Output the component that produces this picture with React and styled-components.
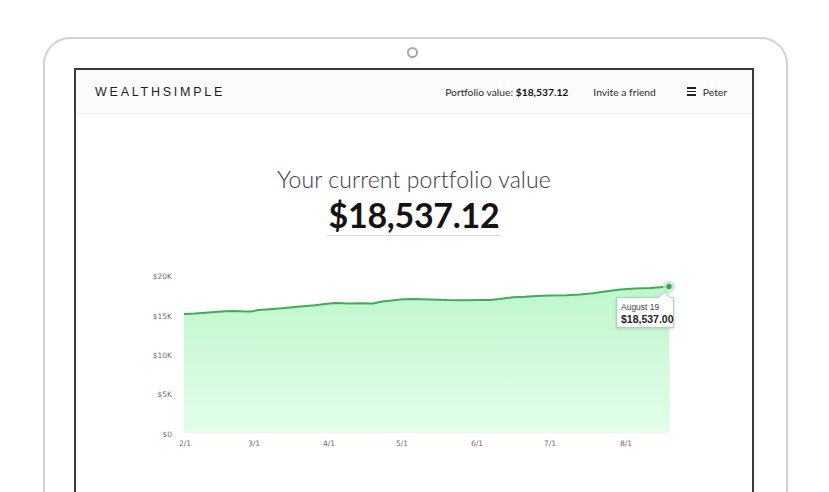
import React from 'react';
import styled, { createGlobalStyle } from 'styled-components';

const GlobalStyle = createGlobalStyle`
  html, body {
    margin: 0;
    padding: 0;
    background: #ffffff;
    overflow: hidden;
  }
  body {
    font-family: "Lato", "Liberation Sans", sans-serif;
    color: #222;
  }
`;

const Stage = styled.div`
  width: 829px;
  height: 492px;
  overflow: hidden;
  padding-top: 37px;
  box-sizing: border-box;
`;

const Laptop = styled.div`
  margin-left: 43px;
  width: 745px;
  height: 520px;
  box-sizing: border-box;
  border: 2px solid #d2d2d2;
  border-bottom: none;
  border-radius: 27px 27px 0 0;
  padding: 8px 32px 0 29px;
  display: flex;
  flex-direction: column;
  align-items: center;
`;

const Camera = styled.div`
  width: 7px;
  height: 7px;
  border: 2px solid #a9a9a9;
  border-radius: 50%;
  margin-bottom: 10px;
  margin-left: -3px;
`;

const Screen = styled.div`
  align-self: stretch;
  flex: 1;
  border: 2px solid #3a3a3a;
  border-bottom: none;
  display: flex;
  flex-direction: column;
`;

const Header = styled.header`
  height: 43px;
  background: #fcfcfc;
  border-bottom: 1px solid #efefef;
  display: flex;
  align-items: center;
  padding: 0 25px 0 19px;
`;

const Logo = styled.div`
  font-family: "Liberation Sans", sans-serif;
  font-size: 12.5px;
  letter-spacing: 2.75px;
  color: #1d1d1d;
  margin-top: 1px;
`;

const Nav = styled.nav`
  margin-left: auto;
  display: flex;
  align-items: center;
  gap: 25px;
  font-size: 10.3px;
  color: #2a2a2a;
`;

const NavItem = styled.span`
  display: flex;
  align-items: center;
  gap: 7px;
  margin-left: ${(p) => p.$extra || 0}px;
  white-space: pre;
  b {
    font-weight: 700;
    color: #111;
  }
`;

const Burger = styled.span`
  display: inline-flex;
  flex-direction: column;
  gap: 2px;
  span {
    display: block;
    width: 9px;
    height: 1.5px;
    background: #222;
  }
`;

const Main = styled.main`
  display: flex;
  flex-direction: column;
  align-items: center;
  padding-top: 51px;
`;

const Title = styled.h1`
  margin: 0;
  font-weight: 300;
  font-size: 23px;
  color: #3a3a3a;
  line-height: 28px;
  letter-spacing: 0.1px;
`;

const Amount = styled.div`
  margin-top: 4px;
  font-weight: 700;
  font-size: 34px;
  line-height: 36px;
  color: #141414;
  padding: 0 2px 2px;
  border-bottom: 1px solid #d9d9d9;
  letter-spacing: -0.3px;
`;

const ChartWrap = styled.div`
  position: relative;
  align-self: stretch;
  margin-top: 22px;
  height: 200px;
  svg {
    display: block;
  }
`;

const Tooltip = styled.div`
  position: absolute;
  left: ${(p) => p.$x}px;
  top: ${(p) => p.$y}px;
  width: 58px;
  height: 31px;
  box-sizing: border-box;
  padding: 4px 0 0 4px;
  background: rgba(255, 255, 255, 0.95);
  border: 1px solid #a8d7b3;
  box-shadow: 0 1px 3px rgba(0, 0, 0, 0.15);
  font-family: "Liberation Sans", sans-serif;
  color: #333;
  &::before {
    content: '';
    position: absolute;
    top: -5px;
    right: 4px;
    width: 8px;
    height: 8px;
    background: #fff;
    border-left: 1px solid #a8d7b3;
    border-top: 1px solid #a8d7b3;
    transform: rotate(45deg);
  }
`;

const TipDate = styled.div`
  position: relative;
  font-size: 8.5px;
  line-height: 11px;
  color: #444;
`;

const TipValue = styled.div`
  font-size: 10.5px;
  line-height: 12px;
  font-weight: 700;
  color: #222;
`;

// page coordinates of the trace, shifted into svg space below
const pts = [
  [184, 314], [195, 313.5], [205, 312.8], [215, 312], [225, 311.2], [235, 311],
  [245, 311.6], [252, 311.4], [258, 310], [270, 309.2], [285, 308], [300, 306.5],
  [315, 305.2], [325, 304], [335, 303], [350, 303.6], [360, 303.2], [373, 303.4],
  [382, 301.6], [392, 300.4], [403, 299.2], [415, 299], [430, 299.4], [447, 300],
  [465, 300.2], [480, 300], [490, 300], [500, 299], [513, 297.2], [525, 296.8],
  [537, 296], [550, 295.6], [567, 295.2], [580, 294.6], [593, 293.2], [605, 291.6],
  [620, 289.4], [635, 288.6], [650, 288], [660, 287.2], [669, 286.4],
];

const OX = 76;
const OY = 258;

const yTicks = [
  ['$20K', 276], ['$15K', 316], ['$10K', 355], ['$5K', 394], ['$0', 434],
];
const xTicks = [
  ['2/1', 185], ['3/1', 254], ['4/1', 329], ['5/1', 402],
  ['6/1', 477], ['7/1', 550], ['8/1', 626],
];

function Chart() {
  const line = pts.map(([x, y], i) => `${i ? 'L' : 'M'}${x - OX},${y - OY}`).join(' ');
  const area = `${line} L${670 - OX},${433 - OY} L${184 - OX},${433 - OY} Z`;
  const last = pts[pts.length - 1];

  return (
    <svg width="676" height="200" viewBox="0 0 676 200">
      <defs>
        <linearGradient id="fill" x1="0" y1="0" x2="0" y2="1">
          <stop offset="0" stopColor="#bff7cc" />
          <stop offset="1" stopColor="#e3fde9" />
        </linearGradient>
      </defs>
      <path d={area} fill="url(#fill)" />
      <path d={line} fill="none" stroke="#3dae58" strokeWidth="2" strokeLinejoin="round" />
      <circle cx={last[0] - OX} cy={last[1] - OY} r="6" fill="#bfe8c8" opacity="0.8" />
      <circle cx={last[0] - OX} cy={last[1] - OY} r="2.6" fill="#36a452" />
      {yTicks.map(([t, y]) => (
        <text key={t} x={172 - OX} y={y - OY + 3} textAnchor="end"
          fontFamily="DejaVu Sans, sans-serif" fontSize="7.5" fill="#6d6d6d">{t}</text>
      ))}
      {xTicks.map(([t, x]) => (
        <text key={t} x={x - OX} y={446 - OY} textAnchor="middle"
          fontFamily="DejaVu Sans, sans-serif" fontSize="7.5" fill="#6d6d6d">{t}</text>
      ))}
    </svg>
  );
}

export default function App() {
  return (
    <Stage>
      <GlobalStyle />
      <Laptop>
        <Camera />
        <Screen>
          <Header>
            <Logo>WEALTHSIMPLE</Logo>
            <Nav>
              <NavItem><span>Portfolio value: <b>$18,537.12</b></span></NavItem>
              <NavItem>Invite a friend</NavItem>
              <NavItem $extra={6}>
                <Burger><span /><span /><span /></Burger>
                Peter
              </NavItem>
            </Nav>
          </Header>
          <Main>
            <Title>Your current portfolio value</Title>
            <Amount>$18,537.12</Amount>
            <ChartWrap>
              <Chart />
              <Tooltip $x={616 - OX} $y={297 - OY}>
                <TipDate>August 19</TipDate>
                <TipValue>$18,537.00</TipValue>
              </Tooltip>
            </ChartWrap>
          </Main>
        </Screen>
      </Laptop>
    </Stage>
  );
}
